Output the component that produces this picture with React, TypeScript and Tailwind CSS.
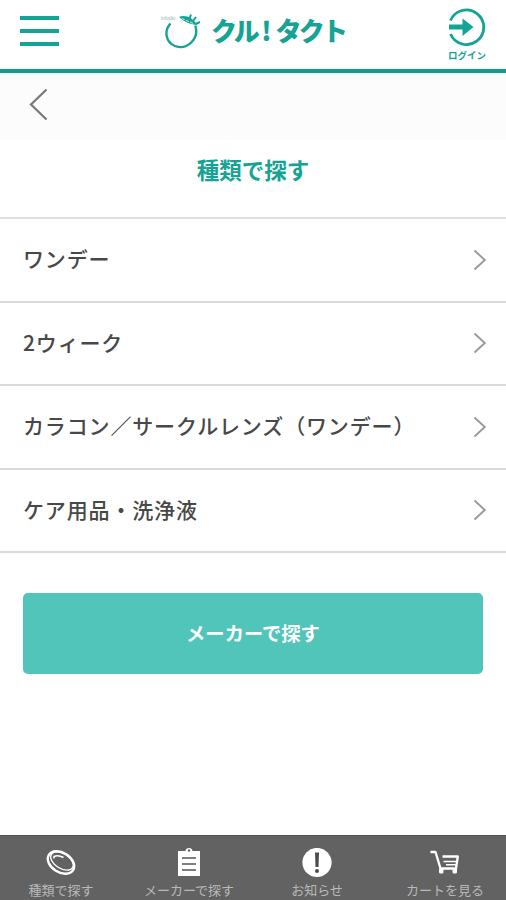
import React from 'react';

const categories = [
  'ワンデー',
  '2ウィーク',
  'カラコン／サークルレンズ（ワンデー）',
  'ケア用品・洗浄液',
];

const LogoMark: React.FC = () => (
  <svg className="h-[38px] w-[42px] shrink-0" viewBox="0 0 42 38" fill="none">
    <path d="M9.500 11.500C2.500 19 5 30.500 14 34C26 38.500 38.500 27 34.300 13.500" stroke="#14a394" strokeWidth="2.400" />
    <path d="M18 4.800C25 2.500 32 6 36 13C29 12.500 22.500 9.500 18 4.800Z" fill="#14a394" />
    <path d="M28.500 7L30 2.500M32 9L35 5M34.500 12L39 10" stroke="#14a394" strokeWidth="2" />
    <path d="M21 6.500L33.500 12" stroke="#fff" strokeWidth=".8" strokeDasharray="3 1.500" />
    <text x="0" y="8" fontSize="4.800" fill="#8fb5ad" fontFamily="Liberation Sans, sans-serif">Infodio</text>
  </svg>
);

const Header: React.FC = () => (
  <header className="flex h-[73px] items-start justify-between border-b-4 border-[#0f9e8e] bg-white pl-5 pr-[19px]">
    <button aria-label="メニュー" className="mt-4 flex w-[39px] flex-col gap-[9px]">
      <span className="h-1 bg-[#14a394]" />
      <span className="h-1 bg-[#14a394]" />
      <span className="h-1 bg-[#14a394]" />
    </button>
    <div className="mt-[12px] flex items-start gap-[8px]">
      <LogoMark />
      <span className="mt-[2px] flex whitespace-nowrap text-[26px] font-black leading-[32px] text-[#14a394]">
        <span className="tracking-[-2.300px]">クル</span>
        <span className="w-[18px] text-center">!</span>
        <span className="tracking-[-2.800px]">タクト</span>
      </span>
    </div>
    <button className="mt-[8px] flex w-[40px] flex-col items-center">
      <svg className="h-[38px] w-[38px]" viewBox="0 0 38 38" fill="none">
        <path d="M2.500 12.500A17.300 17.300 0 1 1 2.500 26" stroke="#14a394" strokeWidth="2.800" />
        <path d="M1 16.500H14.500V10.500L25.500 19L14.500 28V21.500H1Z" fill="#14a394" />
      </svg>
      <span className="mt-[3px] whitespace-nowrap text-[9.500px] font-bold leading-[12px] text-[#14a394]">ログイン</span>
    </button>
  </header>
);

const NavItem: React.FC<{ label: string; children: React.ReactNode }> = ({ label, children }) => (
  <a className="flex w-1/4 flex-col items-center pt-[12px]">
    <svg className="h-[30px] w-[32px]" viewBox="0 0 32 30" fill="none">
      {children}
    </svg>
    <span className="mt-[3px] whitespace-nowrap text-[13px] leading-[18px] text-[#b9b9b9]">{label}</span>
  </a>
);

export default function App() {
  return (
    <div className="flex h-[900px] w-[506px] flex-col overflow-hidden bg-white font-['Noto_Sans_CJK_JP',sans-serif]">
      <Header />
      <div className="flex h-[67px] items-start bg-[#fcfcfc] pl-[29px] pt-[15px]">
        <svg className="h-[33px] w-[20px]" viewBox="0 0 20 33" fill="none">
          <path d="M17.500 1.500L2 16.500L17.500 31.500" stroke="#787878" strokeWidth="2.200" />
        </svg>
      </div>
      <h1 className="flex h-[77px] items-start justify-center pt-[13px] text-[22.500px] font-bold leading-[32px] text-[#14a394]">
        種類で探す
      </h1>
      <ul className="border-t-2 border-[#dfdfdf]">
        {categories.map((name) => (
          <li
            key={name}
            className="flex h-[83.500px] items-center justify-between border-b-2 border-[#d9d9d9] pl-[23px] pr-[19px]"
          >
            <span className="pb-[3px] text-[21px] font-medium leading-[30px] tracking-[0.850px] text-[#484848]">
              {name}
            </span>
            <svg className="h-[22px] w-[14px]" viewBox="0 0 14 22" fill="none">
              <path d="M1.500 1.500L11.800 11L1.500 20.500" stroke="#999" strokeWidth="1.900" />
            </svg>
          </li>
        ))}
      </ul>
      <button className="mx-[23px] mt-[40px] flex h-[81px] items-center justify-center rounded-[5px] bg-[#51c5b9] text-[19.300px] font-bold text-white">
        メーカーで探す
      </button>
      <nav className="-mx-[3px] mt-auto flex h-[65px] border-t border-[#505050] bg-[#626262]">
        <NavItem label="種類で探す">
          <ellipse cx="16" cy="14.500" rx="14.300" ry="9.800" transform="rotate(32 16 14.500)" stroke="#fff" strokeWidth="2.400" />
          <ellipse cx="17" cy="13" rx="12.500" ry="7.400" transform="rotate(32 17 13)" stroke="#fff" strokeWidth="1.400" />
          <path d="M9 10.500V8.500C12 7 15 7.500 18.500 9.500" stroke="#fff" strokeWidth="1.500" />
        </NavItem>
        <NavItem label="メーカーで探す">
          <path d="M5 3H12.500C12.500 -1 19.500 -1 19.500 3H27V28H5Z" fill="#fff" />
          <circle cx="16" cy="2.500" r="1.200" fill="#626262" />
          <path d="M9 10H23M9 16H23M9 22H23" stroke="#555" strokeWidth="1.700" />
        </NavItem>
        <NavItem label="お知らせ">
          <circle cx="16" cy="14.500" r="14.600" fill="#fff" />
          <path d="M14 4.500H18L17.500 19H14.500Z" fill="#4d4d4d" />
          <circle cx="16" cy="23" r="2" fill="#4d4d4d" />
        </NavItem>
        <NavItem label="カートを見る">
          <path d="M1.500 4H6.500L11.500 20.500H27L28.800 8.500H13.500" stroke="#fff" strokeWidth="2.300" strokeLinejoin="round" />
          <path d="M28 13.500H14.500M27.500 16.800H17" stroke="#fff" strokeWidth="1.500" />
          <rect x="10" y="20" width="4.500" height="5.500" rx="1.500" fill="#fff" />
          <rect x="23.500" y="20" width="4.500" height="5.500" rx="1.500" fill="#fff" />
        </NavItem>
      </nav>
    </div>
  );
}
